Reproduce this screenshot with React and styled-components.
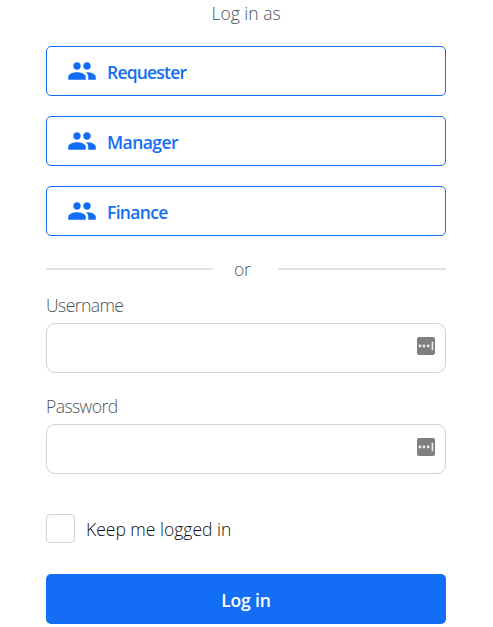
import React from "react";
import styled, { createGlobalStyle } from "styled-components";

const GlobalStyle = createGlobalStyle`
  *, *::before, *::after { box-sizing: border-box; }
  body {
    margin: 0;
    background: #fff;
    font-family: "Open Sans", "Noto Sans", sans-serif;
    overflow: hidden;
  }
`;

const Page = styled.main`
  width: 493px;
  height: 627px;
  padding: 1px 47px 0 46px;
  display: flex;
  flex-direction: column;
`;

const Text = styled.span`
  font-size: 17.5px;
  line-height: 24px;
  font-weight: ${(p) => p.$weight || 300};
  color: ${(p) => p.$color || "#4a535c"};
  letter-spacing: ${(p) => p.$spacing || 0}px;
  white-space: nowrap;
`;

const Heading = styled.header`
  display: flex;
  justify-content: center;
  height: 24px;
  margin-bottom: 21px;
`;

const Roles = styled.div`
  display: grid;
  gap: 20px;
`;

const RoleButton = styled.button`
  display: flex;
  align-items: center;
  gap: 10px;
  height: 50px;
  padding: 2px 20px 0;
  border: 1px solid #146ef5;
  border-radius: 5px;
  background: #fff;
  font-family: inherit;
`;

const PeopleIcon = styled.svg`
  width: 30px;
  height: 30px;
  fill: #146ef5;
  margin-top: -3px;
`;

const Divider = styled.div`
  display: grid;
  grid-template-columns: 167px 65px 168px;
  align-items: center;
  height: 24px;
  margin: 21px 0 12px;
`;

const DividerLabel = styled(Text)`
  padding-left: 21px;
`;

const Rule = styled.div`
  height: 2px;
  background: #dee2e6;
`;

const Field = styled.label`
  display: flex;
  flex-direction: column;
  height: 80px;
  margin-bottom: 21px;
`;

const InputBox = styled.div`
  display: flex;
  align-items: center;
  height: 50px;
  margin-top: 6px;
  padding: 0 10px 4px 16px;
  border: 1px solid #ced4da;
  border-radius: 9px;
`;

const Input = styled.input`
  flex: 1;
  min-width: 0;
  border: 0;
  outline: 0;
  background: transparent;
  font: inherit;
`;

const KeyIcon = styled.svg`
  width: 18px;
  height: 18px;
`;

const CheckRow = styled.label`
  display: flex;
  align-items: center;
  gap: 11px;
  height: 29px;
  margin-top: 19px;
`;

const Checkbox = styled.input`
  appearance: none;
  width: 29px;
  height: 29px;
  margin: 0;
  border: 1px solid #ced4da;
  border-radius: 4px;
`;

const Submit = styled.button`
  height: 50px;
  margin-top: 31px;
  padding: 2px 0 0;
  border: 0;
  border-radius: 5px;
  background: #146ef5;
  font-family: inherit;
`;

const roles = [
  { name: "Requester", spacing: -0.8 },
  { name: "Manager", spacing: -0.55 },
  { name: "Finance", spacing: -0.68 },
];
const fields = [
  { label: "Username", type: "text" },
  { label: "Password", type: "password" },
];

function People() {
  return (
    <PeopleIcon viewBox="0 0 24 24" aria-hidden="true">
      <path d="M16 11c1.66 0 2.99-1.34 2.99-3S17.66 5 16 5s-3 1.34-3 3 1.34 3 3 3zm-8 0c1.66 0 2.99-1.34 2.99-3S9.66 5 8 5 5 6.34 5 8s1.34 3 3 3zm0 2c-2.33 0-7 1.17-7 3.5V19h14v-2.5c0-2.33-4.67-3.5-7-3.5zm8 0c-.29 0-.62.02-.97.05 1.16.84 1.97 1.97 1.97 3.45V19h6v-2.5c0-2.33-4.67-3.5-7-3.5z" />
    </PeopleIcon>
  );
}

function PasswordManager() {
  return (
    <KeyIcon viewBox="0 0 18 18" aria-hidden="true">
      <rect width="18" height="18" rx="2" fill="#7f7f7f" />
      <g fill="#ededed">
        <circle cx="3" cy="9" r="1.4" />
        <circle cx="7" cy="9" r="1.4" />
        <circle cx="11.2" cy="9" r="1.4" />
        <rect x="14.6" y="4.8" width="1.6" height="8.4" rx="0.5" />
      </g>
    </KeyIcon>
  );
}

export default function App() {
  return (
    <Page>
      <GlobalStyle />
      <Heading><Text>Log in as</Text></Heading>
      <Roles>
        {roles.map(({ name, spacing }) => (
          <RoleButton key={name} type="button">
            <People />
            <Text $weight={600} $color="#146ef5" $spacing={spacing}>{name}</Text>
          </RoleButton>
        ))}
      </Roles>
      <Divider>
        <Rule />
        <DividerLabel $spacing={-0.2}>or</DividerLabel>
        <Rule />
      </Divider>
      {fields.map(({ label, type }) => (
        <Field key={label}>
          <Text $spacing={-0.55}>{label}</Text>
          <InputBox>
            <Input type={type} />
            <PasswordManager />
          </InputBox>
        </Field>
      ))}
      <CheckRow>
        <Checkbox type="checkbox" />
        <Text $color="#0b0e11">Keep me logged in</Text>
      </CheckRow>
      <Submit type="submit">
        <Text $weight={600} $color="#fff" $spacing={-0.15}>Log in</Text>
      </Submit>
    </Page>
  );
}
